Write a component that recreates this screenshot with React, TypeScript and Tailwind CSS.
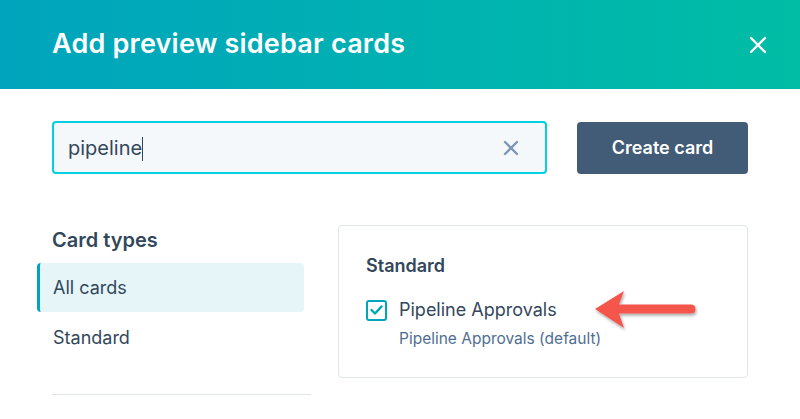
import { X } from "lucide-react";

const font = { fontFamily: "Inter, 'Noto Sans', sans-serif" };

function Arrow() {
  return (
    <svg width="110" height="44" viewBox="0 0 110 44" className="overflow-visible">
      <defs>
        <filter id="sh" x="-20%" y="-40%" width="140%" height="180%">
          <feDropShadow dx="1" dy="2" stdDeviation="1.5" floodColor="#000" floodOpacity="0.35" />
        </filter>
      </defs>
      <g filter="url(#sh)">
        <path d="M2 21 L31 3 L26 16.5 L98 16.5 Q102.5 16.5 102.5 21 Q102.5 25.5 98 25.5 L26 25.5 L31 40 Z" fill="#f4574c" />
      </g>
    </svg>
  );
}

export default function App() {
  return (
    <div className="w-[800px] h-[419px] overflow-hidden bg-white text-[#33475b]" style={font}>
      <div className="h-[89px] flex items-center justify-between pl-[52px] pr-[28px] bg-gradient-to-r from-[#00a4bd] to-[#00bda5]">
        <h1 className="text-[27px] font-semibold text-white tracking-[0.2px]">Add preview sidebar cards</h1>
        <X className="w-[28px] h-[28px] text-white" strokeWidth={2} />
      </div>

      <div className="flex items-center pl-[52px] pt-[32px] gap-[30px]">
        <div className="w-[495px] h-[53px] rounded-[4px] border-2 border-[#00d0e4] bg-[#f5f8fa] flex items-center pl-[14px] pr-[22px] justify-between">
          <span className="text-[20px] text-[#33475b]">
            pipeline<span className="inline-block w-[1px] h-[24px] bg-[#33475b] align-middle" />
          </span>
          <X className="w-[24px] h-[24px] text-[#7c98b6]" strokeWidth={2.4} />
        </div>
        <button className="w-[171px] h-[52px] rounded-[4px] bg-[#425b76] text-white text-[18px] font-semibold">
          Create card
        </button>
      </div>

      <div className="flex pt-[55px]">
        <div className="w-[274px] ml-[37px] mr-[27px]">
          <div className="pl-[15px] text-[20px] font-semibold leading-[24px] -mt-[1px]">Card types</div>
          <div className="mt-[11px] h-[49px] rounded-[4px] bg-[#e5f5f8] border-l-[3px] border-[#00a4bd] flex items-center pl-[13px] text-[18px] w-[267px]">
            All cards
          </div>
          <div className="h-[51px] flex items-center pl-[16px] text-[18px]">Standard</div>
          <div className="ml-[15px] mt-[31px] h-[1px] bg-[#dfe3eb] w-[259px]" />
        </div>

        <div className="-mt-[4px] w-[410px] h-[153px] rounded-[4px] border border-[#dfe3eb] pl-[27px] pt-[28px]">
          <div className="text-[18px] font-semibold leading-[24px]">Standard</div>
          <div className="mt-[10px] flex items-center gap-[12px]">
            <div className="w-[21px] h-[21px] rounded-[3px] border-2 border-[#00a4bd] flex items-center justify-center">
              <svg width="13" height="10" viewBox="0 0 13 10">
                <path d="M1.5 5 L5 8.5 L11.5 1.5" fill="none" stroke="#00a4bd" strokeWidth="2.4" strokeLinecap="round" strokeLinejoin="round" />
              </svg>
            </div>
            <span className="text-[18px] leading-[24px]">Pipeline Approvals</span>
            <div className="ml-[24px]">
              <Arrow />
            </div>
          </div>
          <div className="-mt-[5px] pl-[33px] text-[15.5px] text-[#506e91]">Pipeline Approvals (default)</div>
        </div>
      </div>
    </div>
  );
}
